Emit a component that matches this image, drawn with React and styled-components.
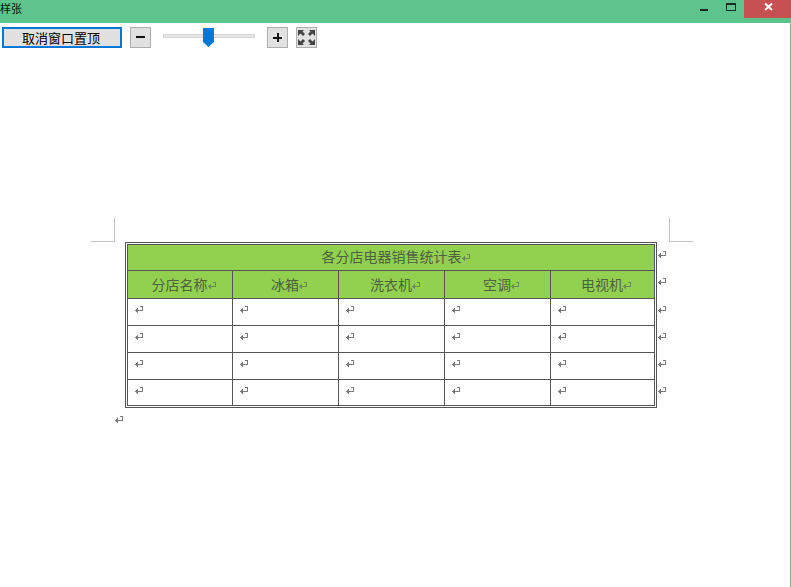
import React from "react";
import styled, { createGlobalStyle } from "styled-components";

const Global = createGlobalStyle`
  html, body { margin: 0; padding: 0; background: #fff; }
  body { font-family: "Noto Sans CJK SC", "Liberation Sans", sans-serif; overflow: hidden; }
`;

const Win = styled.div`
  width: 791px;
  height: 587px;
  display: flex;
  flex-direction: column;
  overflow: hidden;
`;

const TitleBar = styled.header`
  height: 23px;
  flex: none;
  background: #5cc48c;
  display: flex;
  align-items: flex-start;
  justify-content: space-between;
`;

const TitleText = styled.span`
  font-size: 11px;
  line-height: 16px;
  color: #04140c;
`;

const WinControls = styled.div`
  display: flex;
`;

const WinBtn = styled.button`
  width: ${p => p.$w}px;
  height: 18px;
  border: 0;
  padding: 0;
  background: ${p => p.$bg || "transparent"};
  display: flex;
  align-items: flex-start;
  justify-content: center;
`;

const Body = styled.main`
  flex: 1;
  border-right: 1px solid #5cc48c;
  background: #fff;
`;

const Toolbar = styled.div`
  display: flex;
  align-items: flex-start;
  padding: 4px 0 0 2px;
  height: 21px;
`;

const PinButton = styled.button`
  width: 120px;
  height: 21px;
  box-sizing: border-box;
  border: 2px solid #0078d7;
  background: #e1e1e1;
  color: #000;
  font: 13px/17px "Noto Sans CJK SC", sans-serif;
  padding: 0 2px 0 0;
`;

const ZoomButton = styled.button`
  width: 21px;
  height: 21px;
  box-sizing: border-box;
  border: 1px solid #adadad;
  background: #e1e1e1;
  padding: 0;
  margin-left: ${p => p.$ml}px;
  display: flex;
  align-items: center;
  justify-content: center;
`;

const Slider = styled.div`
  position: relative;
  width: 92px;
  height: 21px;
  margin-left: 12px;
  display: flex;
  align-items: center;
`;

const Track = styled.div`
  width: 100%;
  height: 4px;
  margin-top: -3px;
  box-sizing: border-box;
  background: #e7e7e7;
  border: 1px solid #d6d6d6;
`;

const Thumb = styled.svg`
  position: absolute;
  left: 40px;
  top: 1px;
`;

const Sheet = styled.section`
  padding: 194px 0 0 125px;
`;

const TableRow = styled.div`
  display: flex;
  position: relative;
  width: 570px;
`;

const CropMark = styled.div`
  position: absolute;
  top: -24px;
  left: ${p => p.$x}px;
  width: ${p => p.$w}px;
  height: 24px;
  box-sizing: border-box;
  border-bottom: 1px solid #c4c4c4;
  ${p => p.$side === "left" ? "border-right: 1px solid #c4c4c4;" : "border-left: 1px solid #c4c4c4;"}
`;

const DoubleFrame = styled.div`
  border: 1px solid #555;
  padding: 1px;
  flex: none;
`;

const Table = styled.table`
  border-collapse: separate;
  border-spacing: 0;
  table-layout: fixed;
  width: 528px;
  border-top: 1px solid #555;
  border-left: 1px solid #555;
`;

const HeadCell = styled.th`
  box-sizing: border-box;
  border-right: 1px solid #555;
  border-bottom: 1px solid #555;
  padding: 0 0 ${p => p.$lift}px ${p => p.$indent}px;
  height: ${p => p.$h}px;
  background: #92d050;
  text-align: center;
  font-size: 14px;
  line-height: 20px;
  font-weight: 400;
  color: #4f6140;
  white-space: nowrap;
`;

const BodyCell = styled.td`
  box-sizing: border-box;
  border-right: 1px solid #555;
  border-bottom: 1px solid #555;
  padding: 7px 0 0 7px;
  height: ${p => p.$h}px;
  vertical-align: top;
  background: #fff;
  line-height: 0;
`;

const Mark = styled.svg`
  display: inline-block;
  vertical-align: middle;
  color: ${p => p.$c || "#7a7a7a"};
`;

const RowMarks = styled.div`
  display: flex;
  flex-direction: column;
  padding: 0 0 0 1px;
`;

const RowMark = styled.div`
  height: ${p => p.$h}px;
  display: flex;
  align-items: center;
`;

const TailPara = styled.div`
  margin: 8px 0 0 -10px;
  line-height: 0;
`;

const Return = ({ c }) => (
  <Mark $c={c} width="9" height="8" viewBox="0 0 9 8" shapeRendering="crispEdges">
    <path fill="currentColor" d="M5 0h3v5H3v2H2V6H1V5H0V4h1V3h1V2h1v2h4V1H5z" />
  </Mark>
);

const widths = [105, 106, 106, 106, 104];
const heads = ["分店名称", "冰箱", "洗衣机", "空调", "电视机"];
const rowHeights = [27, 27, 27, 26];
const markHeights = [26, 28, 27, 27, 27, 27];

export default function App() {
  return (
    <Win>
      <Global />
      <TitleBar>
        <TitleText>样张</TitleText>
        <WinControls>
          <WinBtn $w={27} aria-label="minimize">
            <svg width="27" height="18"><rect x="10" y="9" width="8" height="2" fill="#1c2b24" /></svg>
          </WinBtn>
          <WinBtn $w={27} aria-label="restore">
            <svg width="27" height="18" shapeRendering="crispEdges">
              <rect x="9.5" y="3.5" width="9" height="7" fill="none" stroke="#1c2b24" />
              <rect x="9" y="3" width="10" height="2" fill="#1c2b24" />
            </svg>
          </WinBtn>
          <WinBtn $w={47} $bg="#c75050" aria-label="close">
            <svg width="47" height="18"><path d="M21 3.500l7 6.500M28 3.500l-7 6.500" stroke="#fff" strokeWidth="2" /></svg>
          </WinBtn>
        </WinControls>
      </TitleBar>
      <Body>
        <Toolbar>
          <PinButton>取消窗口置顶</PinButton>
          <ZoomButton $ml={8} aria-label="zoom out">
            <svg width="9" height="9" shapeRendering="crispEdges"><rect x="0" y="3" width="9" height="2" fill="#111" /></svg>
          </ZoomButton>
          <Slider>
            <Track />
            <Thumb width="11" height="19" viewBox="0 0 11 19">
              <path d="M0 0h11v14l-5.500 5L0 14z" fill="#0078d7" />
            </Thumb>
          </Slider>
          <ZoomButton $ml={12} aria-label="zoom in">
            <svg width="9" height="9" shapeRendering="crispEdges"><path d="M0 3.500h9v2H0zM3.500 0h2v9h-2z" fill="#111" /></svg>
          </ZoomButton>
          <ZoomButton $ml={8} aria-label="full screen">
            <svg width="19" height="19" viewBox="0 0 19 19" fill="#444">
              <path d="M1 2h6L5.500 3.500 8 6 6 8 3.500 5.500 1 8zM18 2v6l-2.500-2.500L13 8l-2-2 2.500-2.500L12 2zM1 17v-6l2.500 2.500L6 11l2 2-2.500 2.500L7 17zM18 17h-6l1.500-1.500L11 13l2-2 2.500 2.500L18 11z" />
            </svg>
          </ZoomButton>
        </Toolbar>
        <Sheet>
          <TableRow>
            <CropMark $side="left" $x={-34} $w={24} />
            <CropMark $side="right" $x={544} $w={24} />
            <DoubleFrame>
              <Table>
                <colgroup>
                  {widths.map((w, i) => <col key={i} style={{ width: w }} />)}
                </colgroup>
                <tbody>
                  <tr>
                    <HeadCell $lift={4} $indent={10} $h={26} colSpan={5}>各分店电器销售统计表<Return c="#6f8a55" /></HeadCell>
                  </tr>
                  <tr>
                    {heads.map(h => <HeadCell $lift={2} $indent={8} $h={28} key={h}>{h}<Return c="#6f8a55" /></HeadCell>)}
                  </tr>
                  {rowHeights.map((rh, r) => (
                    <tr key={r}>
                      {heads.map(h => <BodyCell $h={rh} key={h}><Return /></BodyCell>)}
                    </tr>
                  ))}
                </tbody>
              </Table>
            </DoubleFrame>
            <RowMarks>
              {markHeights.map((h, i) => <RowMark $h={h} key={i}><Return /></RowMark>)}
            </RowMarks>
          </TableRow>
          <TailPara><Return /></TailPara>
        </Sheet>
      </Body>
    </Win>
  );
}
